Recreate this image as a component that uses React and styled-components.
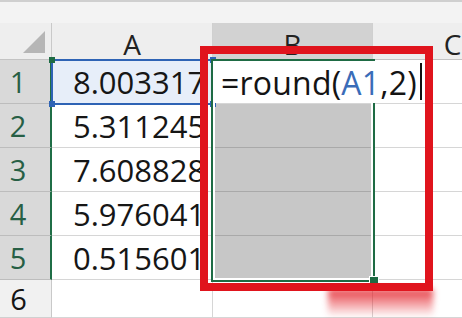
import styled, { createGlobalStyle } from "styled-components";

const GlobalStyle = createGlobalStyle`
  html, body {
    margin: 0;
    padding: 0;
    background: #ffffff;
    overflow: hidden;
  }
  body {
    font-family: "Open Sans", "Noto Sans", sans-serif;
  }
`;

const Screen = styled.div`
  width: 462px;
  height: 318px;
  overflow: hidden;
  display: flex;
  flex-direction: column;
`;

const TopStrip = styled.div`
  height: 21px;
  flex-shrink: 0;
  background: #f3f3f3;
  border-top: 2px solid #cfcfcf;
`;

const Sheet = styled.div`
  position: relative;
  display: grid;
  grid-template-columns: 52px 161px 160px 160px;
  grid-template-rows: 37px repeat(5, 44px) 38px;
`;

const Corner = styled.div`
  background: #eeeeee;
  border-right: 1px solid #c9c9c9;
  border-bottom: 1px solid #c3c3c3;
  display: flex;
  align-items: flex-end;
  justify-content: flex-end;
  padding: 0 6px 6px 0;
  box-sizing: border-box;
`;

const CornerMark = styled.div`
  width: 0;
  height: 0;
  border-left: 22px solid transparent;
  border-bottom: 22px solid #b6b6b6;
`;

const ColHead = styled.div`
  background: ${(p) => (p.$selected ? "#d2d2d2" : "#eeeeee")};
  border-right: 1px solid #d0d0d0;
  border-bottom: 1px solid #c3c3c3;
  box-sizing: border-box;
  display: flex;
  align-items: center;
  justify-content: center;
  padding-top: 6px;
  font-size: 28px;
  color: #222;
`;

const RowHead = styled.div`
  background: ${(p) => (p.$selected ? "#d9d9d9" : "#f1f1f1")};
  border-bottom: 1px solid ${(p) => (p.$selected ? "#bdbdbd" : "#d0d0d0")};
  border-right: ${(p) => (p.$selected ? "2px solid #1f6e46" : "1px solid #c9c9c9")};
  box-sizing: border-box;
  display: flex;
  align-items: center;
  justify-content: center;
  padding-right: 14px;
  font-size: 29px;
  line-height: 1;
  color: ${(p) => (p.$selected ? "#275f45" : "#151515")};
`;

const Cell = styled.div`
  background: ${(p) => p.$bg || "#ffffff"};
  border-right: 1px solid #d6d6d6;
  border-bottom: 1px solid ${(p) => p.$line || "#d6d6d6"};
  box-sizing: border-box;
  display: flex;
  align-items: center;
  padding-left: 21px;
  font-size: 31px;
  color: #161616;
  white-space: nowrap;
  overflow: hidden;
`;

/* formula reference outline around A1 */
const RefBox = styled.div`
  position: absolute;
  left: 51px;
  top: 36px;
  width: 163px;
  height: 46px;
  border: 2px solid #2e63b5;
  box-sizing: border-box;
  pointer-events: none;
`;

const Handle = styled.span`
  position: absolute;
  width: 6px;
  height: 6px;
  background: ${(p) => p.$color || "#2e63b5"};
  ${(p) => (p.$top ? "top: -4px;" : "bottom: -4px;")}
  ${(p) => (p.$left ? "left: -4px;" : "right: -4px;")}
`;

/* green selection frame B1:B5 */
const Selection = styled.div`
  position: absolute;
  left: 211px;
  top: 36px;
  width: 164px;
  height: 223px;
  border: 2px solid #1e6b44;
  box-shadow: inset 0 0 0 2px #ffffff;
  box-sizing: border-box;
  pointer-events: none;
`;

const FillHandle = styled.span`
  position: absolute;
  right: -6px;
  bottom: -6px;
  width: 8px;
  height: 8px;
  background: #1e6b44;
  border: 1px solid #ffffff;
`;

/* in-cell editor spilling over C1 */
const Editor = styled.div`
  position: absolute;
  left: 213px;
  top: 38px;
  width: 208px;
  height: 42px;
  background: #ffffff;
  display: flex;
  align-items: center;
  padding-left: 8px;
  box-sizing: border-box;
  font-size: 32px;
  letter-spacing: 0.2px;
  color: #141414;
  white-space: nowrap;
`;

const Ref = styled.span`
  color: #3a6cb8;
`;

const Caret = styled.span`
  flex-shrink: 0;
  align-self: stretch;
  margin: 2px 0 3px 3px;
  width: 2px;
  background: #111;
`;

const Callout = styled.div`
  position: absolute;
  left: 200px;
  top: 23px;
  width: 233px;
  height: 245px;
  border: 8px solid #e0141d;
  box-sizing: border-box;
  pointer-events: none;
`;

const CalloutGlow = styled.div`
  position: absolute;
  left: 328px;
  top: 266px;
  width: 105px;
  height: 28px;
  background: linear-gradient(to bottom, rgba(226, 24, 32, 0.85), rgba(226, 24, 32, 0));
  filter: blur(3px);
  pointer-events: none;
`;

const values = ["8.003317", "5.311245", "7.608828", "5.976041", "0.515601"];

export default function App() {
  return (
    <Screen>
      <GlobalStyle />
      <TopStrip />
      <Sheet>
        <Corner>
          <CornerMark />
        </Corner>
        <ColHead>A</ColHead>
        <ColHead $selected>B</ColHead>
        <ColHead>C</ColHead>

        {values.map((v, i) => (
          <Row key={v} n={i + 1} value={v} />
        ))}

        <RowHead>6</RowHead>
        <Cell />
        <Cell />
        <Cell />

        <RefBox>
          <Handle $top $left $color="#1e6b44" />
          <Handle $left />
          <Handle />
          <Handle $top />
        </RefBox>
        <Selection>
          <FillHandle />
        </Selection>
        <Editor>
          =round(<Ref>A1</Ref>,2)
          <Caret />
        </Editor>
        <Callout />
        <CalloutGlow />
      </Sheet>
    </Screen>
  );
}

function Row({ n, value }) {
  const first = n === 1;
  return (
    <>
      <RowHead $selected>{n}</RowHead>
      <Cell $bg={first ? "#e7eef9" : undefined}>{value}</Cell>
      <Cell $bg={first ? "#ffffff" : "#c7c7c7"} $line={first ? "#d6d6d6" : "#a9a9a9"} />
      <Cell />
    </>
  );
}
